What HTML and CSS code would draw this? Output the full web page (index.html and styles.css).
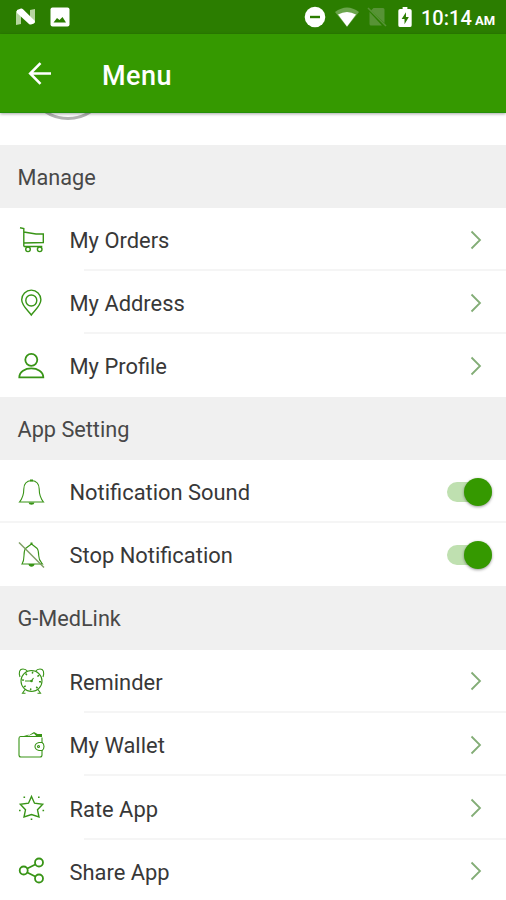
FILE: index.html
```
<!DOCTYPE html>
<html lang="en">
    <head>
        <meta charset="UTF-8">
        <title>Menu</title>
        <link rel="stylesheet" href="styles.css">
    </head>

    <body>
        <div class="status">
            <svg class="status-n" width="20" height="18" viewBox="0 0 20 18">
                <path d="M0 3l5-1v14l-5 1zM14 2l5-1v14l-5 1z" fill="#b5d49f"/>
                <path d="M1 2l4-1.500q1-.3 2 .7L19 13q-.5 3-4 3.500-1 .3-2-.5L1 5z" fill="#fff"/>
            </svg>
            <svg width="20" height="20" viewBox="0 0 20 20">
                <rect x="0.5" y="0.5" width="19" height="19" rx="2" fill="#fff"/>
                <path d="M3.500 15.500l3.500-4.500 2.500 2 3-3 3.500 5.500z" fill="#2b7d00"/>
            </svg>
            <div class="status-right">
                <svg width="22" height="22" viewBox="0 0 22 22">
                    <circle cx="11" cy="11" r="10.3" fill="#fff"/>
                    <path d="M6 11h10" stroke="#2b7d00" stroke-width="2.4"/>
                </svg>
                <svg class="wifi" width="24" height="20" viewBox="0 0 24 20">
                    <path d="M0 5Q12-4 24 5L12 20z" fill="#6ba54c"/>
                    <path d="M3 7.500Q12 2.500 21 7.500L12 19.500z" fill="#fff"/>
                </svg>
                <svg class="sim" width="20" height="20" viewBox="0 0 20 20">
                    <path d="M6.500 1H16q1.500 0 1.500 1.500V16L4 3.500zM2.500 5L15 18.500H4q-1.500 0-1.500-1.500z" fill="#579336"/>
                    <path d="M1 1l18 18" stroke="#579336" stroke-width="1.600"/>
                </svg>
                <svg class="battery" width="14" height="21" viewBox="0 0 14 22">
                    <path d="M4.500 0h5v2H12q2 0 2 2v15q0 2-2 2H2q-2 0-2-2V4q0-2 2-2h2.500z" fill="#fff"/>
                    <path d="M8 5.500L3.500 12.500h3V18l4.500-7.500H8z" fill="#2b7d00"/>
                </svg>
                <span class="time">10:14</span><span class="ampm">AM</span>
            </div>
        </div>

        <div class="toolbar">
            <svg width="24" height="24" viewBox="0 0 24 24">
                <path d="M23 12.500H2.500M12.500 2.200L2.200 12.500l10.300 10.300" fill="none" stroke="#fff" stroke-width="2.600"/>
            </svg>
            <h1>Menu</h1>
        </div>

        <div class="avatar-strip">
            <div class="avatar"></div>
        </div>

        <h2>Manage</h2>
        <div class="row">
            <svg class="icon" viewBox="0 0 28 28">
                <path d="M3 1.800L6.800 2.500v18M6.800 6L19 8h7.300v8.500L6.800 17M6.800 20.500h18.500"/>
                <circle cx="11" cy="23.300" r="2.300"/>
                <circle cx="22.700" cy="23.300" r="2.300"/>
            </svg>
            <span>My Orders</span>
            <svg class="arrow" viewBox="0 0 12 20"><path d="M1.500 1.500L10 10l-8.500 8.500"/></svg>
        </div>
        <div class="row">
            <svg class="icon" viewBox="0 0 28 28">
                <path d="M14.300 26C11 21.500 4.700 16.500 4.700 10.700a9.600 9.600 0 0 1 19.200 0c0 5.800-6.300 10.800-9.600 15.300z"/>
                <circle cx="14.300" cy="11.500" r="5.500"/>
            </svg>
            <span>My Address</span>
            <svg class="arrow" viewBox="0 0 12 20"><path d="M1.500 1.500L10 10l-8.500 8.500"/></svg>
        </div>
        <div class="row last">
            <svg class="icon bold" viewBox="0 0 28 28">
                <circle cx="14.300" cy="7.800" r="6"/>
                <path d="M2.300 25.300C2.300 13.500 26.300 13.500 26.300 25.300z"/>
            </svg>
            <span>My Profile</span>
            <svg class="arrow" viewBox="0 0 12 20"><path d="M1.500 1.500L10 10l-8.500 8.500"/></svg>
        </div>

        <h2>App Setting</h2>
        <div class="row wide">
            <svg class="icon thin" viewBox="0 0 28 28">
                <path d="M14.500 2.500c-5 .5-7.700 4-7.700 8.500 0 6-1 9-4.300 13h24c-3.300-4-4.300-7-4.300-13 0-4.500-2.700-8-7.700-8.500z"/>
                <path class="fill" d="M11.500 24.500h6q-.3 2.300-3 2.300t-3-2.300zM13 1.500h3v2h-3z"/>
            </svg>
            <span>Notification Sound</span>
            <div class="switch"></div>
        </div>
        <div class="row last">
            <svg class="icon thin" viewBox="0 0 28 28">
                <path d="M14.500 3l-6 4.500q-1.500 2-1.500 7c0 3-.3 6-2 8.500h20.500c-2.500-3-3.800-4-3.800-8.500q0-5-1.500-7z"/>
                <path class="fill" d="M11.500 23h6q-.3 2.800-3 2.800t-3-2.800zM13.500 1.500h2v2h-2z"/>
                <path class="slash" d="M2 1.500L27 26.500"/>
            </svg>
            <span>Stop Notification</span>
            <div class="switch"></div>
        </div>

        <h2>G-MedLink</h2>
        <div class="row tall">
            <svg class="icon thin" viewBox="0 0 28 28">
                <circle cx="14.500" cy="14" r="10.500"/>
                <circle cx="14.500" cy="14" r="8.500" stroke-width="2" stroke-dasharray="1.500 5.180"/>
                <path d="M3 10C1.500 5 2.500 2 6 2q3 0 4.500 2.500M26 10C27.500 5 26.500 2 23 2q-3 0-4.500 2.500M8 22.500l-2.500 3.800h3M21 22.500l2.500 3.800h-3M8 14h6.500l2-3"/>
                <circle class="fill" cx="14.500" cy="14" r="1.300"/>
            </svg>
            <span>Reminder</span>
            <svg class="arrow" viewBox="0 0 12 20"><path d="M1.500 1.500L10 10l-8.500 8.500"/></svg>
        </div>
        <div class="row tall">
            <svg class="icon thin" viewBox="0 0 28 28">
                <path d="M24.500 5.500H3.500Q2 5.500 2 7.500V24q0 2 2 2h19q2 0 2-2v-5M25 12V6.500"/>
                <path d="M25 11.500h-3q-4 1-4 4T22 19.500h3q2-1 2-4t-2-4z"/>
                <path class="fill" d="M3.500 6L12 3.500 9 6zM10 5.500l7-4.500 3.500 2H25V6h-5l-3-3.500z"/>
                <circle cx="21.500" cy="15.500" r="1"/>
            </svg>
            <span>My Wallet</span>
            <svg class="arrow" viewBox="0 0 12 20"><path d="M1.500 1.500L10 10l-8.500 8.500"/></svg>
        </div>
        <div class="row tall">
            <svg class="icon" viewBox="0 0 28 28">
                <path d="M14.500 2.500l3 6.700 8.200 1-5.200 5.600 1.500 7.200-7.500-2.500-7.500 2.500 1.500-7.200-5.200-5.600 8.200-1z"/>
                <path d="M6.500 3.300h1.600M21 3.300h1.600M2 16.500h1.600M25.500 16.500h1.600M13.700 25.300h1.600"/>
            </svg>
            <span>Rate App</span>
            <svg class="arrow" viewBox="0 0 12 20"><path d="M1.500 1.500L10 10l-8.500 8.500"/></svg>
        </div>
        <div class="row tall last">
            <svg class="icon bold" viewBox="0 0 28 28">
                <circle cx="6.700" cy="13.500" r="4"/>
                <circle cx="22" cy="5.500" r="4"/>
                <circle cx="22" cy="21.500" r="4"/>
                <path d="M10.300 11.500l8-4M10.300 15.500l8 4"/>
            </svg>
            <span>Share App</span>
            <svg class="arrow" viewBox="0 0 12 20"><path d="M1.500 1.500L10 10l-8.500 8.500"/></svg>
        </div>
    </body>
</html>
```

FILE: styles.css
```
* {
    box-sizing: border-box;
}

body {
    margin: 0;
    height: 900px;
    overflow: hidden;
    background: #fff;
    color: #383838;
    font-family: Roboto, sans-serif;
}

.status {
    display: flex;
    align-items: center;
    height: 34px;
    padding: 0 10px 0 16px;
    background: #2b7d00;
}

.status-n {
    margin-right: 14px;
}

.status-right {
    display: flex;
    align-items: center;
    margin-left: auto;
    color: #fff;
    font-weight: 500;
}

.wifi {
    margin-left: 9px;
}

.sim {
    margin-left: 8px;
}

.battery {
    margin: 0 9px 0 11px;
}

.time {
    width: 51px;
    padding-top: 2px;
    font-size: 20px;
}

.ampm {
    width: 21px;
    margin: 6px 0 0 3px;
    font-size: 13px;
    font-weight: 700;
}

.toolbar {
    position: relative;
    display: flex;
    align-items: center;
    height: 79px;
    padding-left: 28px;
    background: #359900;
    border-bottom: 1px solid #259009;
    box-shadow: 0 1px 3px rgba(0, 0, 0, 0.35);
}

h1 {
    margin: 5px 0 0 50px;
    color: #fff;
    font-size: 27px;
    font-weight: 500;
    letter-spacing: 0.5px;
}

.avatar-strip {
    height: 32px;
    overflow: hidden;
}

/* only the bottom edge shows under the toolbar */
.avatar {
    width: 84px;
    height: 84px;
    margin: -77px 0 0 26px;
    border: 3px solid #b3b3b3;
    border-radius: 50%;
}

h2 {
    height: 63.200px;
    margin: 0;
    padding: 2px 18px 0 17.500px;
    background: #f0f0f0;
    color: #484848;
    font-size: 21.700px;
    font-weight: 400;
    line-height: 62px;
}

.row {
    display: flex;
    align-items: center;
    height: 63px;
    padding: 0 14px 0 17px;
    background: linear-gradient(#f5f5f5, #f5f5f5) 84px 100% / 100% 2px no-repeat;
    font-size: 21.900px;
}

.row.tall {
    height: 63.400px;
}

.row.wide {
    background-position: 0 100%;
}

.row.last {
    background: none;
}

.row span {
    flex: 1;
    padding: 2px 0 0 24.500px;
}

.icon {
    width: 28px;
    height: 28px;
    fill: none;
    stroke: #389416;
    stroke-width: 1.400;
}

.bold {
    stroke-width: 1.800;
}

.thin {
    stroke-width: 1.100;
}

.fill {
    fill: #389416;
    stroke: none;
}

.slash {
    stroke: #7d9d62;
    stroke-width: 1.500;
}

.arrow {
    width: 12px;
    height: 20px;
    margin-right: 10px;
    fill: none;
    stroke: #83ad76;
    stroke-width: 1.800;
}

.switch {
    display: flex;
    align-items: center;
    justify-content: flex-end;
    width: 45px;
    height: 20px;
    border-radius: 10px;
    background: #bfe0b0;
}

.switch::after {
    content: "";
    width: 28px;
    height: 28px;
    flex: none;
    border-radius: 50%;
    background: #359900;
    box-shadow: 0 1px 3px rgba(0, 0, 0, 0.4);
}
```
